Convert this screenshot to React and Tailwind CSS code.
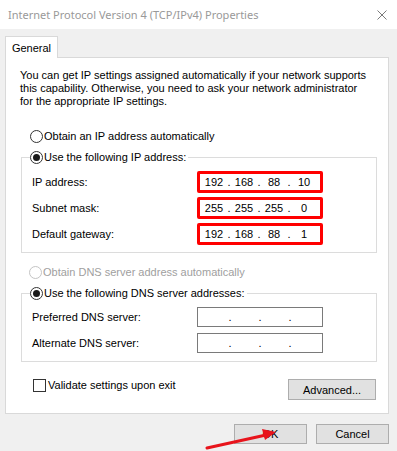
import React from "react";

function Radio({ checked, disabled, label }) {
  return (
    <span className={"flex items-center h-[16px] " + (disabled ? "text-[#a0a0a0]" : "text-black")}>
      <span
        className={
          "w-[13px] h-[13px] rounded-full border bg-white flex items-center justify-center shrink-0 " +
          (disabled ? "border-[#c4c4c4]" : "border-[#333333]")
        }
      >
        {checked && <span className="w-[7px] h-[7px] rounded-full bg-[#1a1a1a]" />}
      </span>
      <span className="ml-[1px] pr-[2px]">{label}</span>
    </span>
  );
}

function IpBox({ parts, red, h }) {
  return (
    <div
      className={
        "w-[126px] flex items-center bg-white " +
        (red ? "border-[3px] border-[#ff0000] rounded-[2px] pl-[2px]" : "border border-[#7a7a7a] pl-[5px]")
      }
      style={{ height: h }}
    >
      {parts.map((p, i) => (
        <React.Fragment key={i}>
          <span className="w-[24px] text-center">{p}</span>
          {i < 3 && <span className="w-[6px] text-center">.</span>}
        </React.Fragment>
      ))}
    </div>
  );
}

function Row({ label, children }) {
  return (
    <div className="flex items-center">
      <span className="w-[175px] pl-[10px]">{label}</span>
      {children}
    </div>
  );
}

export default function App() {
  return (
    <div
      className="relative w-[397px] h-[451px] bg-[#f0f0f0] overflow-hidden text-[11px] leading-[16px] text-black"
      style={{ fontFamily: '"Liberation Sans", Arial, sans-serif' }}
    >
      {/* title bar */}
      <div className="h-[29px] bg-white flex items-center justify-between pl-[8px] pr-[10px]">
        <span className="text-[#999999] whitespace-nowrap" style={{ fontFamily: '"Noto Sans", sans-serif' }}>
          Internet Protocol Version 4 (TCP/IPv4) Properties
        </span>
        <svg width="10" height="10" viewBox="0 0 10 10">
          <path d="M0.5 0.5 L9.5 9.5 M9.5 0.5 L0.5 9.5" stroke="#7a7a7a" strokeWidth="1" />
        </svg>
      </div>

      <div className="px-[5px] pt-[7px]">
        {/* tab */}
        <div className="relative z-10 -mb-px w-[53px] h-[22px] bg-white border border-b-0 border-[#d9d9d9] flex items-center justify-center">
          General
        </div>

        {/* panel */}
        <div className="w-[384px] h-[357px] bg-white border border-[#d9d9d9] flex flex-col">
          <p className="mt-[11px] ml-[14px] leading-[13px] whitespace-nowrap">
            You can get IP settings assigned automatically if your network supports
            <br />
            this capability. Otherwise, you need to ask your network administrator
            <br />
            for the appropriate IP settings.
          </p>

          <div className="mt-[20px] ml-[24px]">
            <Radio label="Obtain an IP address automatically" />
          </div>

          <fieldset className="mt-[5px] ml-[15px] w-[356px] border border-[#dcdcdc] pb-[7px] flex flex-col gap-[4px]">
            <legend className="ml-[8px]">
              <Radio checked label="Use the following IP address:" />
            </legend>
            <div className="mt-[2px]" />
            <Row label="IP address:">
              <IpBox red h="22px" parts={["192", "168", "88", "10"]} />
            </Row>
            <Row label="Subnet mask:">
              <IpBox red h="22px" parts={["255", "255", "255", "0"]} />
            </Row>
            <Row label="Default gateway:">
              <IpBox red h="22px" parts={["192", "168", "88", "1"]} />
            </Row>
          </fieldset>

          <div className="mt-[11px] ml-[23px]">
            <Radio disabled label="Obtain DNS server address automatically" />
          </div>

          <fieldset className="mt-[5px] ml-[15px] w-[356px] border border-[#dcdcdc] pb-[8px] flex flex-col gap-[6px]">
            <legend className="ml-[8px]">
              <Radio checked label="Use the following DNS server addresses:" />
            </legend>
            <div />
            <Row label="Preferred DNS server:">
              <IpBox h="20px" parts={["", "", "", ""]} />
            </Row>
            <Row label="Alternate DNS server:">
              <IpBox h="20px" parts={["", "", "", ""]} />
            </Row>
          </fieldset>

          <div className="mt-[15px] ml-[27px] mr-[12px] flex justify-between items-start">
            <span className="flex items-center">
              <span className="w-[13px] h-[13px] border border-[#333333] bg-white" />
              <span className="ml-[2px]">Validate settings upon exit</span>
            </span>
            <button className="mt-[2px] w-[88px] h-[21px] bg-[#e1e1e1] border border-[#adadad] flex items-center justify-center">
              Advanced...
            </button>
          </div>
        </div>

        {/* footer buttons */}
        <div className="mt-[10px] mr-[3px] flex justify-end gap-[9px]">
          <button className="w-[73px] h-[20px] bg-[#e1e1e1] border border-[#adadad] flex items-center justify-center">
            OK
          </button>
          <button className="w-[73px] h-[20px] bg-[#e1e1e1] border border-[#adadad] flex items-center justify-center">
            Cancel
          </button>
        </div>
      </div>

      {/* red annotation arrow */}
      <svg className="absolute left-0 top-0 pointer-events-none" width="397" height="451" viewBox="0 0 397 451">
        <line x1="207" y1="448" x2="266" y2="435" stroke="#e8141c" strokeWidth="3" strokeLinecap="round" />
        <path d="M276 432 L262 429 L265 440 Z" fill="#e8141c" />
      </svg>
    </div>
  );
}
